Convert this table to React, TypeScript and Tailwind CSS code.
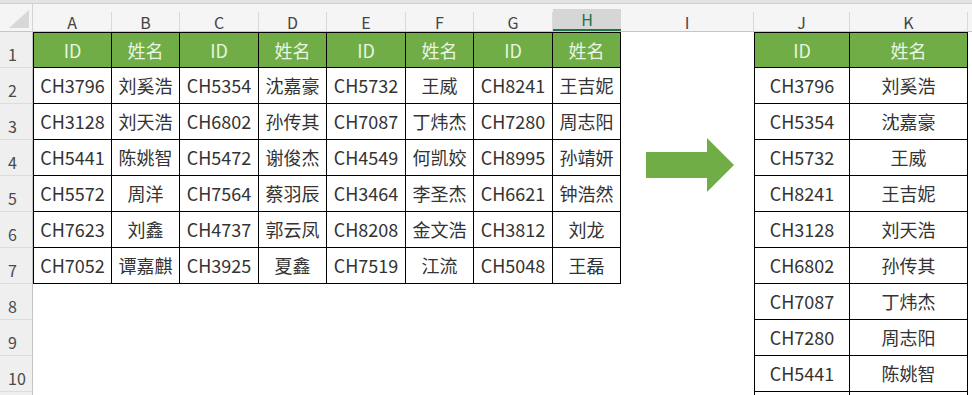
import React from 'react';

type Row = string[];

// Sheet column widths (row header first, then A..K and a sliver of L)
const COLS = [
  { key: 'A', w: 'w-[79px]' },
  { key: 'B', w: 'w-[68px]' },
  { key: 'C', w: 'w-[79px]' },
  { key: 'D', w: 'w-[68px]' },
  { key: 'E', w: 'w-[79px]' },
  { key: 'F', w: 'w-[68px]' },
  { key: 'G', w: 'w-[79px]' },
  { key: 'H', w: 'w-[68px]' },
  { key: 'I', w: 'w-[133px]' },
  { key: 'J', w: 'w-[96px]' },
  { key: 'K', w: 'w-[118px]' },
];

const source: Row[] = [
  ['CH3796', '刘奚浩', 'CH5354', '沈嘉豪', 'CH5732', '王威', 'CH8241', '王吉妮'],
  ['CH3128', '刘天浩', 'CH6802', '孙传其', 'CH7087', '丁炜杰', 'CH7280', '周志阳'],
  ['CH5441', '陈姚智', 'CH5472', '谢俊杰', 'CH4549', '何凯姣', 'CH8995', '孙靖妍'],
  ['CH5572', '周洋', 'CH7564', '蔡羽辰', 'CH3464', '李圣杰', 'CH6621', '钟浩然'],
  ['CH7623', '刘鑫', 'CH4737', '郭云凤', 'CH8208', '金文浩', 'CH3812', '刘龙'],
  ['CH7052', '谭嘉麒', 'CH3925', '夏鑫', 'CH7519', '江流', 'CH5048', '王磊'],
];

// Pairs read row by row into a single two-column list
const stacked: Row[] = source.flatMap((r) => [
  [r[0], r[1]],
  [r[2], r[3]],
  [r[4], r[5]],
  [r[6], r[7]],
]);

const HEADER = ['ID', '姓名', 'ID', '姓名', 'ID', '姓名', 'ID', '姓名'];

// last row only peeks in at the bottom edge, so it is drawn without text
const LAST_ROW = 11;

const Cell: React.FC<{
  w: string;
  text?: string;
  head?: boolean;
  boxed?: boolean;
  first?: boolean;
  top?: boolean;
}> = ({ w, text, head, boxed, first, top }) => {
  if (!boxed) return <div className={`${w} shrink-0 h-full`} />;
  return (
    <div
      className={`${w} shrink-0 h-full flex items-center justify-center border-r border-b border-black ${
        first ? 'border-l' : ''
      } ${top ? 'border-t' : ''} ${
        head ? 'bg-[#70ad47] text-[#e9f5e1]' : 'bg-white text-[#333333]'
      } text-[18px] whitespace-nowrap`}
    >
      {text}
    </div>
  );
};

const SheetRow: React.FC<{ n: number }> = ({ n }) => {
  const left = n === 1 ? HEADER : source[n - 2];
  const right = n === 1 ? ['ID', '姓名'] : stacked[n - 2];
  const showText = n !== LAST_ROW;
  return (
    <div className="flex h-[36px]">
      <div className="w-[33px] shrink-0 h-full bg-[#efefef] border-r border-b border-r-[#c4c4c4] border-b-[#dcdcdc] flex items-center pl-[8px] pt-[8px] text-[16px] text-[#4a4a4a]">
        {showText ? n : null}
      </div>
      {COLS.slice(0, 8).map((c, i) => (
        <Cell
          key={c.key}
          w={c.w}
          text={left?.[i]}
          boxed={!!left}
          head={n === 1}
          first={i === 0}
          top={n === 1}
        />
      ))}
      <Cell w={COLS[8].w} />
      <Cell w={COLS[9].w} text={showText ? right?.[0] : undefined} boxed={!!right} head={n === 1} first top={n === 1} />
      <Cell w={COLS[10].w} text={showText ? right?.[1] : undefined} boxed={!!right} head={n === 1} top={n === 1} />
      <div className="flex-1" />
    </div>
  );
};

export default function App() {
  return (
    <div className="relative w-[972px] h-[395px] overflow-hidden bg-white font-['Noto_Sans_CJK_SC',sans-serif]">
      {/* formula bar edge */}
      <div className="h-[4px] bg-[#e4e4e4] border-b border-[#d0d0d0]" />

      {/* column letters */}
      <div className="flex h-[28px] bg-[#f5f5f5] border-b border-[#c6c6c6]">
        <div className="w-[33px] shrink-0 h-full flex items-end justify-end border-r border-[#d4d4d4] pr-[3px] pb-[3px]">
          <svg width="20" height="18" viewBox="0 0 20 18">
            <path d="M20 0 L20 18 L0 18 Z" fill="#d8d8d8" />
          </svg>
        </div>
        {COLS.map((c) =>
          c.key === 'H' ? (
            <div key={c.key} className={`${c.w} shrink-0 h-full pt-[5px]`}>
              <div className="h-full bg-[#d6d6d6] border-b-2 border-[#217346] flex items-center justify-center text-[16px] text-[#217346]">
                {c.key}
              </div>
            </div>
          ) : (
            <div key={c.key} className={`${c.w} shrink-0 h-full pt-[8px]`}>
              <div className="h-full border-r border-[#d9d9d9] flex items-center justify-center text-[16px] text-[#444444]">
                {c.key}
              </div>
            </div>
          )
        )}
        <div className="flex-1" />
      </div>

      {[1, 2, 3, 4, 5, 6, 7, 8, 9, 10, 11].map((n) => (
        <SheetRow key={n} n={n} />
      ))}

      {/* block arrow shape sitting over column I */}
      <svg className="absolute left-[646px] top-[138px]" width="88" height="54" viewBox="0 0 88 54">
        <path d="M0 14 H61 V0 L88 27 L61 54 V40 H0 Z" fill="#70ad47" />
      </svg>
    </div>
  );
}
